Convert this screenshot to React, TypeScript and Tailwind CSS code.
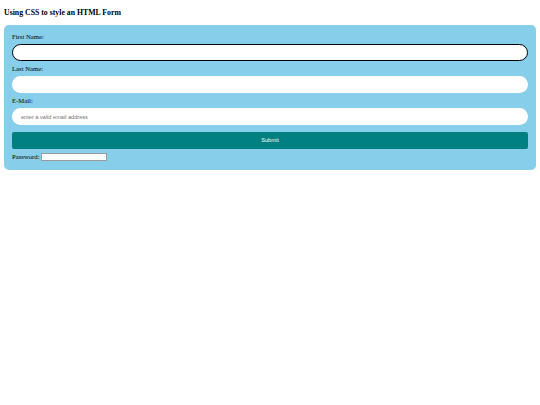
import React from "react";

export default function App() {
  return (
    <div className="w-[540px] h-[405px] bg-white px-[4px] pt-[8px]" style={{ fontFamily: '"Liberation Serif", "Times New Roman", serif' }}>
      <h3 className="text-[7.8px] leading-[9px] font-bold text-black mb-[8px]">Using CSS to style an HTML Form</h3>
      <form className="bg-[#87CEEB] rounded-[5px] px-[8px] pt-[8px] pb-[5px] text-[6.7px] text-black">
        <label className="block leading-[8px] mb-[3px]">First Name:</label>
        <input
          type="text"
          className="block w-full h-[17px] rounded-full bg-white border border-black outline-none mb-[4px]"
        />
        <label className="block leading-[8px] mb-[3px]">Last Name:</label>
        <input
          type="text"
          className="block w-full h-[17px] rounded-full bg-white outline-none mb-[4px]"
        />
        <label className="block leading-[8px] mb-[3px]">E-Mail:</label>
        <input
          type="text"
          placeholder="enter a valid email address"
          className="block w-full h-[17px] rounded-full bg-white outline-none pl-[9px] text-[5.6px] placeholder:text-[#757575]"
          style={{ fontFamily: '"Liberation Sans", Arial, sans-serif' }}
        />
        <button
          type="button"
          className="block w-full h-[17px] mt-[7px] bg-[#008080] rounded-[2px] text-white text-[5.6px]"
          style={{ fontFamily: '"Liberation Sans", Arial, sans-serif' }}
        >
          Submit
        </button>
        <div className="flex items-center h-[16px]">
          <span className="leading-[8px]">Password:</span>
          <input
            type="password"
            className="ml-[1px] w-[66px] h-[8px] bg-white border border-[#9a9a9a] outline-none"
          />
        </div>
      </form>
    </div>
  );
}
